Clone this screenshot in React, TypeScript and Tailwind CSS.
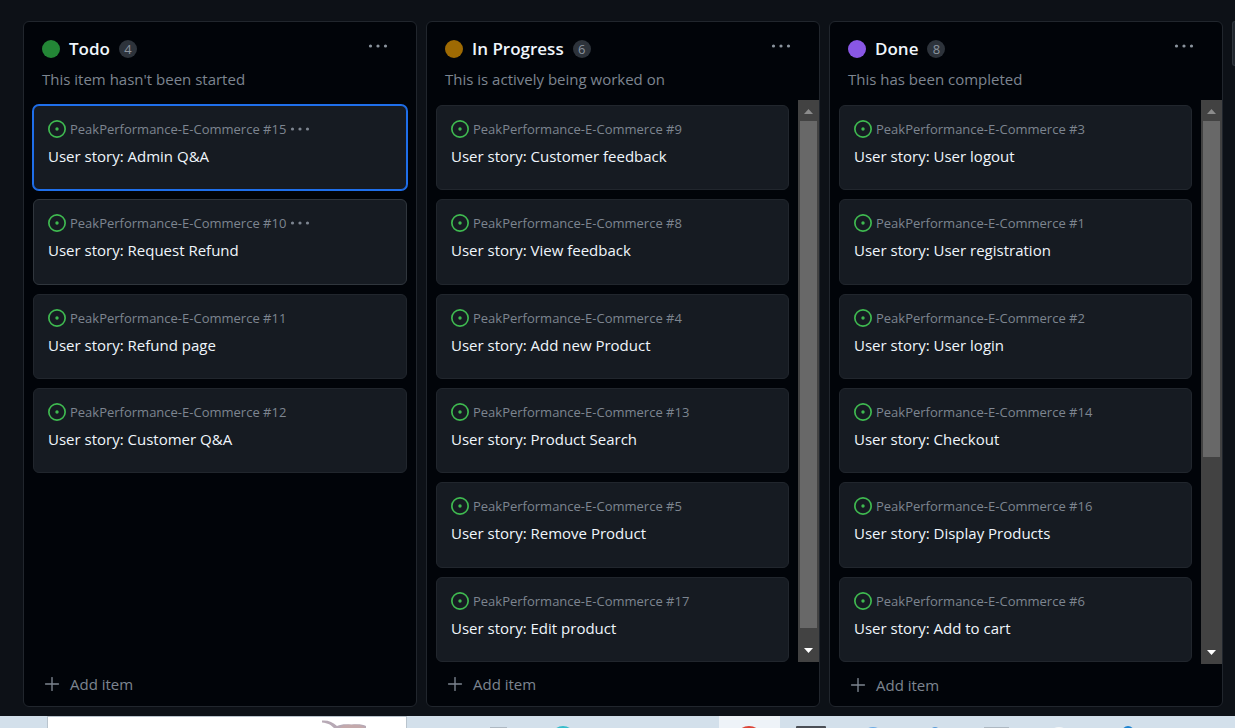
import { Plus } from "lucide-react";

type Item = { id: number; title: string; menu?: boolean; selected?: boolean };
type ColumnData = {
  name: string;
  note: string;
  count: number;
  dot: string;
  items: Item[];
  list: string;
  footer: string;
  thumb?: number;
};

const columns: ColumnData[] = [
  {
    name: "Todo",
    note: "This item hasn't been started",
    count: 4,
    dot: "bg-[#238636]",
    list: "pb-0",
    footer: "h-11",
    items: [
      { id: 15, title: "User story: Admin Q&A", menu: true, selected: true },
      { id: 10, title: "User story: Request Refund", menu: true },
      { id: 11, title: "User story: Refund page" },
      { id: 12, title: "User story: Customer Q&A" },
    ],
  },
  {
    name: "In Progress",
    note: "This is actively being worked on",
    count: 6,
    dot: "bg-[#9e6a03]",
    list: "pb-0",
    footer: "h-11",
    thumb: 97.5,
    items: [
      { id: 9, title: "User story: Customer feedback" },
      { id: 8, title: "User story: View feedback" },
      { id: 4, title: "User story: Add new Product" },
      { id: 13, title: "User story: Product Search" },
      { id: 5, title: "User story: Remove Product" },
      { id: 17, title: "User story: Edit product" },
    ],
  },
  {
    name: "Done",
    note: "This has been completed",
    count: 8,
    dot: "bg-[#8957e5]",
    list: "pb-0.5",
    footer: "h-[42px]",
    thumb: 64.4,
    items: [
      { id: 3, title: "User story: User logout" },
      { id: 1, title: "User story: User registration" },
      { id: 2, title: "User story: User login" },
      { id: 14, title: "User story: Checkout" },
      { id: 16, title: "User story: Display Products" },
      { id: 6, title: "User story: Add to cart" },
    ],
  },
];

function Dots() {
  return (
    <svg width="20" height="6" viewBox="0 0 20 6" fill="currentColor" aria-hidden="true">
      <circle cx="2.5" cy="3" r="1.6" />
      <circle cx="10" cy="3" r="1.6" />
      <circle cx="17.5" cy="3" r="1.6" />
    </svg>
  );
}

function OpenIcon() {
  return (
    <svg width="18" height="18" viewBox="0 0 16 16" fill="#3fb950" className="shrink-0" aria-hidden="true">
      <path d="M8 9.5a1.5 1.5 0 1 0 0-3 1.5 1.5 0 0 0 0 3Z" />
      <path d="M8 0a8 8 0 1 1 0 16A8 8 0 0 1 8 0ZM1.5 8a6.5 6.5 0 1 0 13 0 6.5 6.5 0 0 0-13 0Z" />
    </svg>
  );
}

function Card({ item }: { item: Item }) {
  const border = item.selected
    ? "border-[#1f6feb] ring-1 ring-[#1f6feb]"
    : item.menu
      ? "border-[#30363d]"
      : "border-[#21262d]";
  return (
    <li className={`min-h-0 rounded-md border bg-[#161b22] px-3.5 pt-[13px] ${border}`}>
      <div className="flex h-5 items-center gap-1 text-[13px] leading-5 text-[#7d8590]">
        <OpenIcon />
        <span className="whitespace-nowrap">PeakPerformance-E-Commerce #{item.id}</span>
        {item.menu && (
          <button type="button" aria-label={`Options for #${item.id}`}>
            <Dots />
          </button>
        )}
      </div>
      <a href={`#${item.id}`} className="mt-[5px] block text-[15px] leading-6 text-[#f0f6fc]">
        {item.title}
      </a>
    </li>
  );
}

function Scrollbar({ thumb }: { thumb: number }) {
  return (
    <div className="flex w-[21px] shrink-0 flex-col bg-[#424242]" aria-hidden="true">
      <svg width="21" height="21" viewBox="0 0 21 21">
        <path d="M6 14 10.5 9 15 14Z" fill="#8b8b8b" />
      </svg>
      <div className="min-h-0 flex-1 px-0.5">
        <div className="bg-[#686868]" style={{ height: `${thumb}%` }} />
      </div>
      <svg width="21" height="21" viewBox="0 0 21 21">
        <path d="M6 7 10.5 12 15 7Z" fill="#fff" />
      </svg>
    </div>
  );
}

function Column({ data }: { data: ColumnData }) {
  return (
    <section className="flex min-w-0 flex-1 flex-col rounded-md border border-[#21262d] bg-[#010409]">
      <header className="h-[78px] shrink-0 pt-[15px] pr-7 pl-[18px]">
        <div className="flex h-6 items-center">
          <span className={`size-[18px] rounded-full ${data.dot}`} />
          <h2 className="ml-[9px] text-[17px] font-semibold text-[#f0f6fc]">{data.name}</h2>
          <span className="ml-[9px] flex size-[18px] items-center justify-center rounded-full bg-[#2d333b] text-[13px] leading-none text-[#8b949e]">
            {data.count}
          </span>
          <button type="button" aria-label={`${data.name} options`} className="mb-1.5 ml-auto text-[#8b949e]">
            <Dots />
          </button>
        </div>
        <p className="mt-1.5 text-[15px] leading-6 text-[#7d8590]">{data.note}</p>
      </header>
      <div className="flex min-h-0 flex-1">
        <ul className={`grid min-w-0 flex-1 grid-rows-6 gap-[9px] px-[9px] pt-[5px] ${data.list}`}>
          {data.items.map((item) => (
            <Card key={item.id} item={item} />
          ))}
        </ul>
        {data.thumb !== undefined && <Scrollbar thumb={data.thumb} />}
      </div>
      <button
        type="button"
        className={`flex shrink-0 items-center gap-[7px] pl-[17px] text-[15px] font-medium text-[#7d8590] ${data.footer}`}
      >
        <Plus size={22} strokeWidth={1.5} />
        Add item
      </button>
    </section>
  );
}

function Taskbar() {
  return (
    <footer className="h-3 shrink-0 overflow-hidden bg-[#d3e0eb]">
      <svg width="1235" height="12" viewBox="0 0 1235 12" aria-hidden="true">
        <path d="M47 0H407V12H47Z" fill="#b9c4cd" />
        <path d="M48 1H406V12H48Z" fill="#fff" />
        <path d="M322 4.5C328 4 333 6 337 10C341 8 346 8 351 8.5C357 8 363 8 366 10V12H334C331 9 328 7 322 6.5Z" fill="#b7a9b5" />
        <path d="M340 12C342 9 347 8.5 352 9C357 8.5 362 9 365 12Z" fill="#c4a9ab" />
        <path d="M490 11H507V12H490ZM984 11H1009V12H984Z" fill="#adb8c2" />
        <circle cx="563" cy="22" r="12" fill="#35bccb" />
        <path d="M719 0H780V12H719Z" fill="#eef3f8" />
        <circle cx="749" cy="24" r="14" fill="#dc4437" />
        <rect x="796" y="10" width="30" height="8" rx="1" fill="#4a4e55" />
        <circle cx="873" cy="22" r="11" fill="#6caae6" />
        <circle cx="935" cy="16" r="5" fill="#5a9bd8" />
        <circle cx="1059" cy="22" r="11" fill="#f4f6f8" />
        <circle cx="1128" cy="16" r="6" fill="#1d83d0" />
      </svg>
    </footer>
  );
}

export default function App() {
  return (
    <div className="flex h-screen flex-col overflow-hidden bg-[#0d1117] font-['Open_Sans','Noto_Sans',sans-serif]">
      <main className="flex min-h-0 flex-1 gap-[9px] pt-[21px] pb-[9px] pl-[23px]">
        {columns.map((c) => (
          <Column key={c.name} data={c} />
        ))}
        <button
          type="button"
          aria-label="Add a new column"
          className="h-[45px] w-[3px] shrink-0 rounded-l-md border border-r-0 border-[#30363d] bg-[#21262d]"
        />
      </main>
      <Taskbar />
    </div>
  );
}
